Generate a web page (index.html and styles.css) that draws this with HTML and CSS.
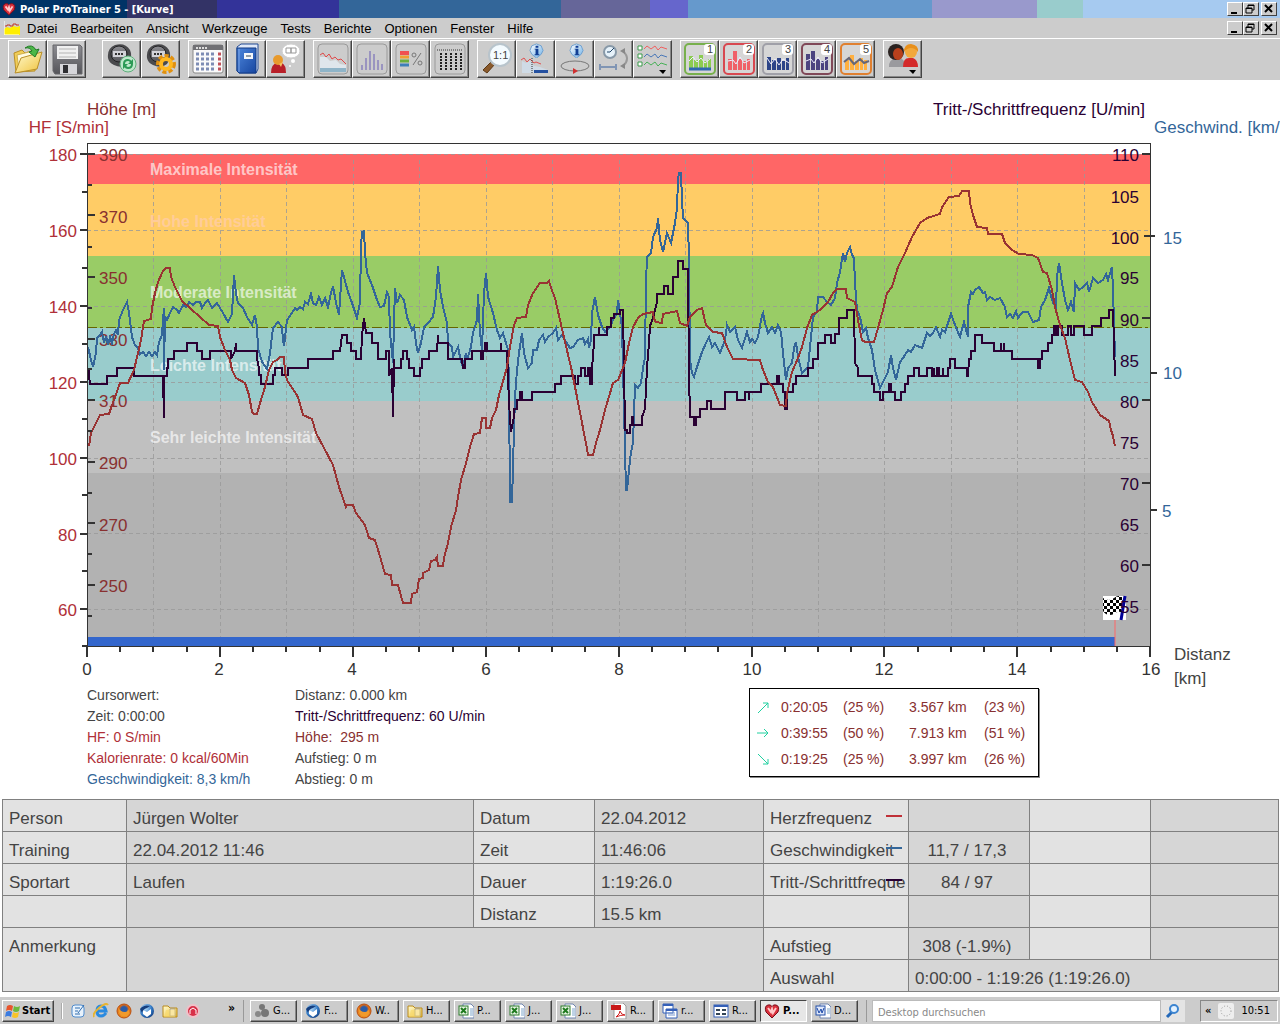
FILE: index.html
```
<!DOCTYPE html>
<html lang="de">
<head>
  <meta charset="UTF-8" />
  <title>Polar ProTrainer 5 - [Kurve]</title>
  <link rel="stylesheet" href="styles.css">
</head>
<body>

  <!-- Shared icon parts -->
  <svg class="defs" aria-hidden="true">
    <defs>
      <linearGradient id="steel" x1="0" y1="0" x2="0" y2="1"><stop offset="0" stop-color="#8d8d92"/><stop offset="1" stop-color="#55555a"/></linearGradient>
      <linearGradient id="folder" x1="0" y1="0" x2="1" y2="1"><stop offset="0" stop-color="#fffbd0"/><stop offset="1" stop-color="#f0c23c"/></linearGradient>
      <linearGradient id="info" x1="0" y1="0" x2="1" y2="1"><stop offset="0" stop-color="#ffffff"/><stop offset="1" stop-color="#6fb0e6"/></linearGradient>
      <linearGradient id="book" x1="0" y1="0" x2="1" y2="1"><stop offset="0" stop-color="#4d86dc"/><stop offset="1" stop-color="#1746a0"/></linearGradient>
      <radialGradient id="ball" cx=".35" cy=".3" r=".8"><stop offset="0" stop-color="#bfe4ff"/><stop offset=".6" stop-color="#3279c4"/><stop offset="1" stop-color="#123a7c"/></radialGradient>
      <radialGradient id="fire" cx=".5" cy=".4" r=".7"><stop offset=".3" stop-color="#2a5ca8"/><stop offset=".5" stop-color="#e06a14"/><stop offset="1" stop-color="#f8b42c"/></radialGradient>
      <pattern id="checks" width="6" height="6" patternUnits="userSpaceOnUse"><path d="M0 0h3v3h-3zM3 3h3v3h-3z" fill="#000"/></pattern>
      <symbol id="i-heart" viewBox="0 0 16 16"><path d="M8 15L2 9Q0 3 4 2 7 1 8 4 9 1 12 2 16 3 14 9z" fill="#d8303c" stroke="#7a0c18"/><path d="M4 5l3 4 1-3 1 4 3-5" fill="none" stroke="#ffc8c8" stroke-width="2"/></symbol>
      <symbol id="i-min" viewBox="0 0 12 10"><path d="M3 8h6v2h-6z"/></symbol>
      <symbol id="i-restore" viewBox="0 0 12 10"><path d="M4 4V1h6v5H8M4 1.500h6M2 4h6v5H2zM2 4.500h6" fill="none" stroke="#000"/></symbol>
      <symbol id="i-close" viewBox="0 0 12 10"><path d="M3 1l7 7M10 1l-7 7" stroke="#000" stroke-width="2"/></symbol>
      <symbol id="i-watch" viewBox="0 0 32 32"><path d="M2 15Q1 5 9 2 19-1 24 7 27 14 22 21 16 26 8 22 3 20 2 15z" fill="#4a4a4d"/><circle cx="13" cy="11" r="8" fill="url(#steel)" stroke="#232325"/><path d="M7 8h13v6H7z" fill="#d2d2d8"/><path d="M9 11h2M12 11h2M15 11h2" stroke="#333" stroke-width="2"/></symbol>
      <symbol id="i-info" viewBox="0 0 16 16"><path d="M8 1l5 2 2 5-2 4-5 4-5-4-2-4 2-5z" fill="url(#info)" stroke="#6d9fd0"/><path d="M7 3h3v2H7zM6 6h4v6h1v1H6v-1h1V7H6z" fill="#123f94"/></symbol>
      <symbol id="i-frame" viewBox="0 0 32 32"><rect x="1" y="1" width="30" height="30" rx="4" fill="none" stroke="#9a9a9a"/></symbol>
      <symbol id="i-sheet" viewBox="0 0 16 16"><path d="M5 1h8l3 3v11H5z" fill="#fff" stroke="#7086b0"/><path d="M12 6h3M12 8h3M12 10h3M12 12h3" stroke="#7fa6cc"/><rect x="1" y="3" width="9" height="9" fill="#e6f4e2" stroke="#2d7a2d"/><path d="M3 5l5 5M8 5l-5 5" stroke="#1e7a1e" stroke-width="2"/></symbol>
      <symbol id="i-folder" viewBox="0 0 16 16"><path d="M1 3h5l2 2h7v9H1z" fill="url(#folder)" stroke="#b98a1c"/><path d="M8 6h5v7H8z" fill="#fff" stroke="#999"/><path d="M4 7l10-1-1 8H2z" fill="#f6d766" opacity=".6"/></symbol>
      <symbol id="i-fox" viewBox="0 0 16 16"><circle cx="8" cy="8" r="7" fill="url(#fire)" stroke="#b84c10"/><path d="M2 4Q4 9 9 9q3 0 3-3 3 4-1 7-5 2-8-3z" fill="#f09a2c"/></symbol>
      <symbol id="i-bird" viewBox="0 0 16 16"><circle cx="8" cy="8" r="7" fill="url(#ball)"/><path d="M4 7l4 2 4-3v5l-4 3-4-3z" fill="#fff"/><path d="M1 6Q5 1 11 3l-3 2Q4 6 3 10z" fill="#153f80"/></symbol>
    </defs>
  </svg>

  <header class="titlebar">
    <svg class="app-icon"><use href="#i-heart"/></svg>
    <h1>Polar ProTrainer 5 - [Kurve]</h1>
    <div class="win-buttons">
      <button aria-label="Minimieren"><svg><use href="#i-min"/></svg></button>
      <button aria-label="Wiederherstellen"><svg><use href="#i-restore"/></svg></button>
      <button class="close" aria-label="Schließen"><svg><use href="#i-close"/></svg></button>
    </div>
  </header>

  <nav class="menubar">
    <svg class="doc-icon" viewBox="0 0 16 14"><path d="M0 14V8l3-2 3 1 3-2 4 1 3-1v9z" fill="#ffee00"/><path d="M1 5h2v-1h3v1h3V3h3v1h3" fill="none" stroke="#c0392b"/><path d="M0 0v14h15" fill="none" stroke="#fff"/></svg>
    <button>Datei</button>
    <button>Bearbeiten</button>
    <button>Ansicht</button>
    <button>Werkzeuge</button>
    <button>Tests</button>
    <button>Berichte</button>
    <button>Optionen</button>
    <button>Fenster</button>
    <button>Hilfe</button>
    <div class="win-buttons">
      <button aria-label="Fenster minimieren"><svg><use href="#i-min"/></svg></button>
      <button aria-label="Fenster wiederherstellen"><svg><use href="#i-restore"/></svg></button>
      <button class="close" aria-label="Fenster schließen"><svg><use href="#i-close"/></svg></button>
    </div>
  </nav>

  <div class="toolbar">
    <div class="tools wide">
      <button aria-label="Öffnen"><svg viewBox="0 0 32 32"><path d="M2 10l8-3 3 3 9-3 2 4-1 17-19 1z" fill="#f1cd56" stroke="#b98f28"/><path d="M5 12l16-4 1 16-15 3z" fill="#fffbe0" stroke="#d0b050"/><path d="M3 30l6-15 21-6-5 17z" fill="url(#folder)" stroke="#b98f28"/><path d="M13 5Q20 0 24 7l3-1-4 8-6-5 3-1Q18 4 13 5z" fill="#4cb848" stroke="#1f7a24"/></svg></button>
      <button aria-label="Speichern"><svg viewBox="0 0 32 32"><path d="M2 2h27l2 2v27H4l-2-3z" fill="url(#steel)" stroke="#66666a"/><path d="M6 3h21v13H6z" fill="#f0f0f0"/><path d="M8 6h17M8 10h17M8 14h17" stroke="#b4b4b4"/><path d="M9 21h17v10H9z" fill="#d6d6da"/><path d="M12 22h5v8h-5z" fill="#2e2e32"/></svg></button>
    </div>
    <div class="tools">
      <button aria-label="Daten übertragen"><svg viewBox="0 0 32 32"><use href="#i-watch" width="32" height="32"/><circle cx="22" cy="21" r="8" fill="#bfe8cc" stroke="#5fae7c"/><path d="M18 21q0-4 4-4 2 0 3 2M26 21q0 4-4 4-2 0-3-2" fill="none" stroke="#2c9a56" stroke-width="2"/><path d="M27 16v5h-5zM17 26v-5h5z" fill="#2c9a56"/></svg></button>
      <button aria-label="Gerät einstellen"><svg viewBox="0 0 32 32"><use href="#i-watch" width="32" height="32"/><circle cx="21" cy="21" r="8" fill="none" stroke="#e09010" stroke-width="4" stroke-dasharray="4 2"/><circle cx="21" cy="21" r="5" fill="none" stroke="#ffb820" stroke-width="4"/></svg></button>
    </div>
    <div class="tools">
      <button aria-label="Kalender"><svg viewBox="0 0 32 32"><rect x="1" y="2" width="30" height="28" rx="2" fill="#fafafa" stroke="#888"/><path d="M1 2h30v5H1z" fill="#707074"/><path d="M4 5h12" stroke="#ddd" stroke-width="2" stroke-dasharray="2 1"/><path d="M4 11h20M4 16h20M4 21h20M4 26h20" stroke="#7d8cb4" stroke-width="3" stroke-dasharray="3 2"/><path d="M26 11h3M26 16h3M26 21h3M26 26h3" stroke="#c05058" stroke-width="3"/></svg></button>
      <button aria-label="Tagebuch"><svg viewBox="0 0 32 32"><path d="M6 4l4-3h17v25l-2 4H8l-2-2z" fill="#dfe8f8" stroke="#224a94"/><path d="M6 5h19v25H8l-2-2z" fill="url(#book)" stroke="#123a84"/><path d="M8 6v23" stroke="#7ea6e6"/><path d="M13 10h9v6h-9z" fill="#f4f6fa"/><path d="M15 13h5" stroke="#345"/></svg></button>
      <button aria-label="Person"><svg viewBox="0 0 32 32"><path d="M1 30q0-9 6-10h5q4 2 4 10z" fill="#b81f28"/><circle cx="8" cy="17" r="5" fill="#e89a2c"/><path d="M9 21l2 3 2-5z" fill="#f4c060"/><ellipse cx="21" cy="8" rx="9" ry="7" fill="#fff" stroke="#d0d0d0"/><path d="M16 5h5v5h-5zM21 5h5v5h-5z" fill="none" stroke="#999"/><circle cx="23" cy="18" r="2" fill="#fff"/><circle cx="20" cy="23" r="1" fill="#fff"/></svg></button>
    </div>
    <div class="tools">
      <button aria-label="Kurve"><svg viewBox="0 0 32 32"><use href="#i-frame" width="32" height="32"/><path d="M3 14l6 0 4 4 6-1 4 4 6 1v7H3z" fill="#dfe6ec"/><path d="M3 25h26v4H3z" fill="#8fb4c8"/><path d="M3 12l3-2 3 4 3-3 3 5 3-2 3 3 3-1 5 5" fill="none" stroke="#e04848"/></svg></button>
      <button aria-label="Verteilung"><svg viewBox="0 0 32 32"><use href="#i-frame" width="32" height="32"/><path d="M6 27v-5M10 27V15M14 27V8M18 27V11M22 27V17M26 27v-6" stroke="#9a94c0" stroke-width="2"/></svg></button>
      <button aria-label="Zonen"><svg viewBox="0 0 32 32"><use href="#i-frame" width="32" height="32"/><path d="M5 10h9" stroke="#f05050" stroke-width="4"/><path d="M5 14h9" stroke="#f0a030" stroke-width="3"/><path d="M5 18h9" stroke="#6cae3c" stroke-width="3"/><path d="M5 22h9" stroke="#3f7fb8" stroke-width="3"/><path d="M26 10l-8 12" stroke="#777"/><circle cx="19" cy="12" r="2" fill="none" stroke="#777"/><circle cx="25" cy="20" r="2" fill="none" stroke="#777"/></svg></button>
      <button aria-label="Tabelle"><svg viewBox="0 0 32 32"><use href="#i-frame" width="32" height="32"/><path d="M3 7h26" stroke="#333" stroke-dasharray="1 1"/><path d="M7 10v17M12 10v17M17 10v17M22 10v17M27 10v17" stroke="#222" stroke-width="2" stroke-dasharray="2 1"/></svg></button>
    </div>
    <div class="tools">
      <button aria-label="Zoom 1:1"><svg viewBox="0 0 32 32"><path d="M2 27l9-9 3 3-8 9z" fill="#8a5a2c" stroke="#5c3814"/><circle cx="19" cy="12" r="11" fill="#f4fbff" stroke="#b8c4cc" stroke-width="2"/><text x="12" y="16" class="t-icon">1:1</text></svg></button>
      <button aria-label="Kurveninfo"><svg viewBox="0 0 32 32"><use href="#i-info" x="9" y="0" width="15" height="15"/><path d="M2 18l4 2 4-2 4 5 6 1 8 3v3H2z" fill="#cfdbe6"/><path d="M14 27h14v3H14z" fill="#2450a0"/><path d="M1 17l3-2 3 4 3-3 4 4 2-1 5 2" fill="none" stroke="#e05050"/><path d="M12 15v15" stroke="#333" stroke-dasharray="1 1"/></svg></button>
      <button aria-label="Rundeninfo"><svg viewBox="0 0 32 32"><use href="#i-info" x="10" y="0" width="15" height="15"/><ellipse cx="16" cy="23" rx="14" ry="5" fill="none" stroke="#777"/><path d="M14 25l5 3-5 3z" fill="#d03030"/></svg></button>
      <button aria-label="Zeit oder Distanz"><svg viewBox="0 0 32 32"><circle cx="12" cy="9" r="6" fill="#e6f2fa" stroke="#8899a8" stroke-width="2"/><path d="M12 9l4-4M12 9h-3" stroke="#246"/><path d="M2 24h16M2 21v6M18 21v6" stroke="#8095b4" stroke-width="2"/><path d="M25 8q8 8 0 15" fill="none" stroke="#999" stroke-width="2"/><path d="M22 8l5-3v6zM22 23l5-3v6z" fill="#888"/></svg></button>
      <button aria-label="Kurvenauswahl"><svg viewBox="0 0 32 32"><path d="M1 3h4v4H1zM1 11h4v4H1zM1 19h4v4H1z" fill="#fff" stroke="#3a9a4a"/><path d="M7 6l3-3 4 3 4-3 3 4 3-3 6 2" fill="none" stroke="#f06060"/><path d="M7 14l3-3 4 3 4-3 3 4 3-3 6 2" fill="none" stroke="#4a78b8"/><path d="M7 22l3-3 4 3 4-3 3 4 3-3 6 2" fill="none" stroke="#48b058"/><path d="M22 27h7l-3 4z"/></svg></button>
    </div>
    <div class="tools presets">
      <button class="p1" aria-label="Ansicht 1"><svg viewBox="0 0 32 32"><rect x="1" y="1" width="30" height="30" rx="4" class="edge"/><path d="M5 27V13h4v14M10 27V17h4v10M15 27V12h4v15M20 27V18h3v9M24 27V16h3v11" class="bars"/><path d="M5 18l4-4 4 5 4-4 4 5 5-4" class="wave"/><path d="M5 26h22" stroke="#2f68b0" stroke-width="3"/><rect x="20" y="1" width="11" height="11" rx="3" fill="#fff"/><text x="23" y="10" class="t-icon">1</text></svg></button>
      <button class="p2" aria-label="Ansicht 2"><svg viewBox="0 0 32 32"><rect x="1" y="1" width="30" height="30" rx="4" class="edge"/><path d="M5 27V16h4v11M10 27V8h4v19M15 27V16h4v11M20 27V18h3v9M24 27V16h3v11" class="bars"/><path d="M5 18l5-1 3 4 4-7 4 6 6-3" class="wave"/><rect x="20" y="1" width="11" height="11" rx="3" fill="#fff"/><text x="23" y="10" class="t-icon">2</text></svg></button>
      <button class="p3" aria-label="Ansicht 3"><svg viewBox="0 0 32 32"><rect x="1" y="1" width="30" height="30" rx="4" class="edge"/><path d="M5 27V14h4v13M10 27V17h4v10M15 27V15h4v12M20 27V18h3v9M24 27V15h3v12" class="bars"/><path d="M5 15l4 6 4-5 4 6 4-6 6 4" class="wave"/><rect x="20" y="1" width="11" height="11" rx="3" fill="#fff"/><text x="23" y="10" class="t-icon">3</text></svg></button>
      <button class="p4" aria-label="Ansicht 4"><svg viewBox="0 0 32 32"><rect x="1" y="1" width="30" height="30" rx="4" class="edge"/><path d="M5 27V11h4v16M10 27V8h4v19M15 27V16h4v11M20 27V18h3v9M24 27V14h3v13" class="bars"/><path d="M5 18l5-2 3 4 4-6 4 6 6-4" class="wave"/><rect x="20" y="1" width="11" height="11" rx="3" fill="#fff"/><text x="23" y="10" class="t-icon">4</text></svg></button>
      <button class="p5" aria-label="Ansicht 5"><svg viewBox="0 0 32 32"><rect x="1" y="1" width="30" height="30" rx="4" class="edge"/><path d="M5 27V17h4v10M10 27V12h4v15M15 27V18h4v9M20 27V15h3v12M24 27V17h3v10" class="bars"/><path d="M4 19l5-4 5 6 6-5 4 4 5-2" class="wave"/><rect x="20" y="1" width="11" height="11" rx="3" fill="#fff"/><text x="23" y="10" class="t-icon">5</text></svg></button>
    </div>
    <div class="tools">
      <button aria-label="Person wählen"><svg viewBox="0 0 32 32"><path d="M2 24q0-8 6-8h7q4 3 4 8z" fill="#9a9a9e"/><path d="M16 24q0-9 6-9h4q5 2 5 9z" fill="#d42a2a"/><circle cx="24" cy="9" r="6" fill="#f2a83c"/><path d="M17 9q0-8 7-8 8 1 7 8-3-4-7-4t-7 4z" fill="#e8901c"/><circle cx="9" cy="9" r="8" fill="#2a2220"/><ellipse cx="11" cy="11" rx="5" ry="6" fill="#b8401c"/><path d="M22 27h7l-3 4z"/></svg></button>
    </div>
  </div>

  <main>
    <svg class="chart" viewBox="0 80 1280 605" role="img" aria-label="Trainingskurve">
      <!-- intensity zones -->
      <g shape-rendering="crispEdges">
        <rect x="87" y="154" width="1063" height="30" fill="#ff6666"/>
        <rect x="87" y="184" width="1063" height="72" fill="#ffcc66"/>
        <rect x="87" y="256" width="1063" height="72" fill="#99cc66"/>
        <rect x="87" y="328" width="1063" height="73" fill="#99cccc"/>
        <rect x="87" y="401" width="1063" height="72" fill="#c0c0c0"/>
        <rect x="87" y="473" width="1063" height="173" fill="#b2b2b2"/>
      </g>
      <path class="grid" d="M87 154H1150M87 230H1150M87 306H1150M87 382H1150M87 458H1150M87 533H1150M87 609H1150M153 160V637M220 160V637M286 160V637M353 160V637M419 160V637M486 160V637M552 160V637M619 160V637M685 160V637M752 160V637M818 160V637M884 160V637M951 160V637M1017 160V637M1084 160V637"/>
      <g class="zones">
        <text x="150" y="175">Maximale Intensität</text>
        <text x="150" y="227" class="faint">Hohe Intensität</text>
        <text x="150" y="298">Moderate Intensität</text>
        <text x="150" y="371">Leichte Intensität</text>
        <text x="150" y="443">Sehr leichte Intensität</text>
      </g>
      <g class="altitude-labels">
        <text x="99" y="161">390</text><text x="99" y="223">370</text><text x="99" y="284">350</text><text x="99" y="346">330</text>
        <text x="99" y="407">310</text><text x="99" y="469">290</text><text x="99" y="531">270</text><text x="99" y="592">250</text>
        <text x="87" y="115">Höhe [m]</text>
      </g>
      <rect x="87" y="637" width="1028" height="9" fill="#3366cc"/>
      <path class="limit" d="M87 327H1150"/>

      <!-- speed -->
      <polyline class="line speed" points="88,347 91,360 93,367 96,353 97,338 100,335 102,332 104,343 106,336 108,345 110,337 112,343 114,334 116,330 118,335 119,320 123,310 127,302 129,313 132,337 135,345 138,348 140,354 143,352 146,356 149,352 152,356 155,352 157,355 159,342 162,335 163,320 164,308 164,370 165,317 167,320 170,313 173,307 177,310 179,313 183,305 186,307 189,302 193,305 196,302 200,302 202,308 205,303 208,300 212,308 217,303 220,308 223,313 228,322 232,314 234,275 236,293 238,303 243,308 247,317 252,325 255,315 257,327 258,348 262,362 267,369 270,353 273,328 278,322 282,327 283,340 284,346 287,320 292,313 295,308 297,310 300,307 303,309 305,302 308,304 311,294 313,303 316,305 319,297 322,305 325,298 328,307 331,293 333,286 336,303 339,315 342,270 344,277 348,292 352,303 357,318 360,303 361,247 362,232 364,231 365,253 367,273 372,285 377,300 380,307 384,306 387,292 389,297 390,333 393,363 394,323 395,288 397,303 400,295 404,300 407,317 412,330 414,327 416,343 418,353 421,343 424,327 428,323 433,317 436,297 438,266 440,290 443,307 447,323 448,343 452,347 453,357 458,347 460,357 463,368 466,353 467,360 471,347 473,333 477,320 478,294 480,333 482,350 484,293 486,273 488,297 493,313 497,330 500,338 503,333 506,343 508,350 509,383 510,502 512,502 514,430 515,397 517,370 519,353 522,333 524,353 528,368 532,363 533,350 537,350 539,340 543,335 545,342 548,337 553,333 556,328 558,340 562,335 565,340 570,348 573,347 578,340 583,338 585,344 588,339 589,348 591,340 592,313 595,297 598,315 602,327 605,332 610,327 613,320 617,313 618,300 620,313 622,327 623,367 626,490 627,490 629,470 631,452 633,443 635,385 638,388 641,383 643,368 645,357 646,283 647,257 651,253 653,237 657,228 658,218 660,240 663,252 667,233 671,243 675,223 677,208 678,180 679,173 681,173 682,200 683,218 688,223 689,260 690,360 692,373 694,377 697,367 702,352 706,343 709,337 712,347 715,343 720,353 725,340 727,325 730,332 735,327 738,340 742,348 747,332 750,342 752,339 755,343 758,337 762,315 763,313 765,323 768,333 772,327 775,333 778,325 781,332 783,353 786,380 788,368 792,363 794,348 796,342 798,357 802,373 805,370 808,367 811,337 813,317 817,312 818,297 823,297 827,302 831,305 835,298 837,283 840,272 843,253 845,262 847,253 850,247 852,255 854,258 855,283 857,310 860,317 863,332 866,328 868,338 872,350 875,370 880,388 883,382 888,372 891,355 893,368 896,380 900,362 903,358 905,355 908,350 911,352 915,345 922,348 927,333 930,336 933,333 936,327 940,337 942,330 945,332 951,314 955,325 960,337 964,322 968,337 968,307 971,292 973,294 975,290 979,287 983,293 985,292 987,300 990,297 995,300 1000,298 1005,307 1007,317 1010,314 1013,318 1016,311 1018,318 1020,315 1023,312 1028,312 1033,322 1039,320 1041,307 1045,300 1049,288 1053,303 1056,307 1057,277 1059,263 1062,283 1065,300 1068,310 1071,302 1074,312 1075,283 1079,290 1083,287 1087,283 1089,292 1093,278 1098,283 1103,280 1106,274 1108,280 1112,267 1113,290 1114,323 1115,357"/>

      <!-- cadence -->
      <path class="line cadence" d="M89 368V375L90 384H107V376H117V368H134V376H163L164 418V376H167V368H168V359H174V351H187V343H197V351H202V359H210V351H231V359L235 351 236 343V351H257V359L259 368V375H261V384H273V375H275V368H282V375H288V368H308V359H333V351H340L342 335H347V343H351V351H356V359H361L362 335 364 318 366 333H372V343H378V359H386V351H389V376L392 368 393 417 394 359V368H401V359H403V351H407V359H409V368H414V376H420V368H422V359H429V351H437L438 335V343H448V359H462L463 368H465V359H472V351H481V359H483V351H485V343H487V351H501V343V351H507L509 403 511 432 514 416V409H517V400H520V392H522V400H532V392H555V384H561V376H575V384H578V376H581V368H585V376H588V368H590V384H592V368L594 343V335H599V327V335H607V327H611V318H614V314H620V310H623L624 367 625 430H627V433H630V425H632V417H633V425H642V417L645 409 647 368 649 343 650 326 653 318 655 310 657 302V294H664V286H668V294H673V277H678V261H683V269H688L689 384 690 408V417H694V425H696V417H700V409H707V401H711V409H725V392H737V400H745V392H749V400V392H761V384H777V376H779V384H783V392H785V409H787V392H793V384H796V376H808V368H813V359H818V343H825V335H831V343H835V334H839V318H847V310H854L855 363 858 368V376H872V384H874V392H880V400H883V392H889V384H891V392H895V400H901V392H905V384H908V376H914V368H919V376H927V368H932V376H934V368V376H937V368H939V376H943V368V376H948V368H950V359H955V368H967V376H968L969 359H971V351H975V335H982V343H994V351H1001V343V351H1004V343V351H1012V359H1038V368H1040V359H1042V351H1048V343H1052V335H1054V326H1056V335H1058V326H1062V335H1068V326H1071V335H1074V326H1084V335H1092V326H1101V318H1109V310H1113L1115 376"/>

      <!-- altitude -->
      <polyline class="line altitude" points="89,446 91,433 96,423 100,415 109,414 111,408 115,397 120,383 128,383 134,370 138,353 141,340 144,321 151,319 152,308 155,293 158,282 163,271 166,268 170,268 171,277 175,287 182,301 190,308 200,317 209,325 218,326 220,337 225,350 230,360 232,370 236,378 245,383 249,395 252,412 254,414 257,414 260,403 265,387 269,370 273,362 277,360 280,357 284,357 285,372 287,380 298,397 303,415 312,419 316,433 324,448 333,465 339,487 346,507 347,505 353,505 356,513 365,525 369,538 375,540 379,553 385,574 391,575 392,585 398,585 403,603 411,603 412,594 417,592 419,579 423,578 423,573 429,570 431,561 435,560 437,557 438,566 443,566 444,558 448,543 451,527 456,510 458,497 461,480 466,463 470,447 474,434 480,433 482,418 486,418 486,428 490,428 492,418 496,410 499,395 504,378 507,367 510,347 514,325 517,318 526,317 528,305 533,293 540,283 547,283 549,281 551,288 555,298 560,320 565,342 571,367 577,397 583,428 586,443 588,455 593,455 596,443 600,430 605,410 613,383 618,380 625,363 629,343 633,327 638,318 643,314 653,312 654,319 656,322 662,323 663,314 677,311 680,323 687,326 690,317 697,310 702,308 706,325 713,332 722,333 727,347 733,359 760,360 763,370 768,382 773,387 780,405 786,406 787,393 792,372 798,358 802,347 807,328 812,315 820,310 828,302 833,293 837,289 846,289 847,298 855,302 858,320 862,340 865,342 874,342 878,328 883,310 887,293 892,287 898,267 905,253 912,237 920,223 927,218 940,214 942,207 949,197 959,196 962,191 969,191 970,203 973,215 977,227 987,228 988,234 1002,234 1005,243 1012,250 1019,254 1032,255 1038,258 1043,272 1047,273 1052,290 1055,307 1060,325 1065,338 1070,360 1075,380 1082,382 1088,392 1092,402 1100,415 1109,421 1111,430 1113,436 1115,446"/>

      <!-- frame and ticks -->
      <path class="frame" d="M87 646V143H1150V646z"/>
      <path class="axis" d="M80 154H95M80 230H87M80 306H87M80 382H87M80 458H87M80 534H87M80 609H87M82 192H87M82 268H87M82 344H87M82 419H87M82 495H87M82 571H87M82 646H87M87 215H95M87 277H95M87 339H95M87 400H95M87 462H95M87 523H95M87 585H95M87 185H92M87 247H92M87 308H92M87 369H92M87 431H92M87 493H92M87 554H92M87 616H92M1142 154H1150M1144 236H1155M1142 318H1150M1150 373H1157M1142 400H1150M1142 483H1150M1150 510H1157M1142 565H1150"/>
      <path class="axis" d="M87 646V657M220 646V657M353 646V657M486 646V657M619 646V657M752 646V657M884 646V657M1017 646V657M1150 646V657M120 646V652M153 646V652M187 646V652M253 646V652M286 646V652M320 646V652M386 646V652M419 646V652M453 646V652M519 646V652M552 646V652M585 646V652M652 646V652M685 646V652M718 646V652M785 646V652M818 646V652M851 646V652M918 646V652M951 646V652M984 646V652M1051 646V652M1084 646V652M1117 646V652"/>

      <!-- finish flag -->
      <path d="M1115 619V646" stroke="#ff6666"/>
      <rect x="1103" y="596" width="23" height="24" fill="#fff"/>
      <path d="M1103 598q6 4 11 0t9 0l-2 14q-4-1-7 2-7 3-11-3z" fill="url(#checks)"/>
      <path d="M1125 596l-4 24" stroke="#000099" stroke-width="3"/>

      <g class="hr-labels">
        <text x="77" y="161">180</text><text x="77" y="237">160</text><text x="77" y="313">140</text><text x="77" y="389">120</text>
        <text x="77" y="465">100</text><text x="77" y="541">80</text><text x="77" y="616">60</text>
        <text x="109" y="133">HF [S/min]</text>
      </g>
      <g class="cadence-labels">
        <text x="1139" y="161">110</text><text x="1139" y="203">105</text><text x="1139" y="244">100</text><text x="1139" y="284">95</text>
        <text x="1139" y="326">90</text><text x="1139" y="367">85</text><text x="1139" y="408">80</text><text x="1139" y="449">75</text>
        <text x="1139" y="490">70</text><text x="1139" y="531">65</text><text x="1139" y="572">60</text><text x="1139" y="613">55</text>
        <text x="1145" y="115">Tritt-/Schrittfrequenz [U/min]</text>
      </g>
      <g class="speed-labels">
        <text x="1163" y="244">15</text><text x="1163" y="379">10</text><text x="1162" y="517">5</text>
        <text x="1154" y="133">Geschwind. [km/</text>
      </g>
      <g class="distance-labels">
        <text x="87" y="675">0</text><text x="219" y="675">2</text><text x="352" y="675">4</text><text x="486" y="675">6</text><text x="619" y="675">8</text>
        <text x="752" y="675">10</text><text x="884" y="675">12</text><text x="1017" y="675">14</text><text x="1151" y="675">16</text>
      </g>
      <g class="distance-title">
        <text x="1174" y="660">Distanz</text><text x="1174" y="684">[km]</text>
      </g>
    </svg>

    <section class="readout">
      <ul>
        <li>Cursorwert:</li>
        <li>Zeit: 0:00:00</li>
        <li class="c-hr">HF: 0 S/min</li>
        <li class="c-hr">Kalorienrate: 0 kcal/60Min</li>
        <li class="c-speed">Geschwindigkeit: 8,3 km/h</li>
      </ul>
      <ul>
        <li>Distanz: 0.000 km</li>
        <li class="c-cadence">Tritt-/Schrittfrequenz: 60 U/min</li>
        <li class="c-alt">Höhe:&nbsp; 295 m</li>
        <li>Aufstieg: 0 m</li>
        <li>Abstieg: 0 m</li>
      </ul>
      <table class="climb">
        <tr><td><svg viewBox="0 0 12 12"><path d="M1 11L11 1M6 1h5v5"/></svg></td><td>0:20:05</td><td>(25 %)</td><td>3.567 km</td><td>(23 %)</td></tr>
        <tr><td><svg viewBox="0 0 12 12"><path d="M0 6h11M7 2l4 4-4 4"/></svg></td><td>0:39:55</td><td>(50 %)</td><td>7.913 km</td><td>(51 %)</td></tr>
        <tr><td><svg viewBox="0 0 12 12"><path d="M1 1l10 10M6 11h5V6"/></svg></td><td>0:19:25</td><td>(25 %)</td><td>3.997 km</td><td>(26 %)</td></tr>
      </table>
    </section>

    <table class="summary">
      <colgroup><col class="w1"><col class="w2"><col class="w3"><col class="w4"><col class="w5"><col class="w3"><col class="w3"><col class="w6"></colgroup>
      <tr><th>Person</th><td>Jürgen Wolter</td><th>Datum</th><td>22.04.2012</td><th class="key k-hr">Herzfrequenz</th><td></td><td class="light"></td><td></td></tr>
      <tr><th>Training</th><td>22.04.2012 11:46</td><th>Zeit</th><td>11:46:06</td><th class="key k-speed">Geschwindigkeit</th><td class="mid">11,7 / 17,3</td><td class="light"></td><td></td></tr>
      <tr><th>Sportart</th><td>Laufen</td><th>Dauer</th><td>1:19:26.0</td><th class="key k-cadence">Tritt-/Schrittfreque</th><td class="mid">84 / 97</td><td class="light"></td><td></td></tr>
      <tr><th></th><td></td><th>Distanz</th><td>15.5 km</td><th></th><td></td><td class="light"></td><td></td></tr>
      <tr><th rowspan="2" class="note">Anmerkung</th><td rowspan="2" colspan="3"></td><th>Aufstieg</th><td class="mid">308 (-1.9%)</td><td class="light"></td><td></td></tr>
      <tr><th>Auswahl</th><td colspan="3">0:00:00 - 1:19:26 (1:19:26.0)</td></tr>
    </table>
  </main>

  <footer class="taskbar">
    <button class="start"><svg viewBox="0 0 16 16"><path d="M2 3q3-2 6 0L7 8Q4 6 1 8z" fill="#e8542c"/><path d="M9 3q3 2 6 0l-1 5q-3 2-6 0z" fill="#6cb83c"/><path d="M1 9q3-2 6 0l-1 5Q3 12 0 14z" fill="#3c7ce0"/><path d="M8 9q3 2 6 0l-1 5q-3 2-6 0z" fill="#f8c428"/></svg>Start</button>
    <div class="quick">
      <button aria-label="Desktop anzeigen"><svg viewBox="0 0 16 16"><rect x="2" y="2" width="12" height="12" rx="3" fill="#e8f2fc" stroke="#4f8cce"/><path d="M5 5h5M5 8h3M5 11h5M8 10l6-8" fill="none" stroke="#2f6cae"/></svg></button>
      <button aria-label="Internet Explorer"><svg viewBox="0 0 16 16"><path d="M13 10q-2 3-5 3-4 0-4-5t4-5q4 0 5 5H5" fill="none" stroke="#2a8ae0" stroke-width="3"/><path d="M1 14Q-1 11 6 5t9-3" fill="none" stroke="#e8b430" stroke-width="2"/></svg></button>
      <button aria-label="Firefox"><svg><use href="#i-fox"/></svg></button>
      <button aria-label="Thunderbird"><svg><use href="#i-bird"/></svg></button>
      <button aria-label="Explorer"><svg><use href="#i-folder"/></svg></button>
      <button aria-label="Antivirus"><svg viewBox="0 0 16 16"><circle cx="8" cy="8" r="6" fill="#d83048" stroke="#f0c0c8" stroke-width="2"/><path d="M5 11V7l3-2 3 2v4" fill="none" stroke="#fff"/></svg></button>
    </div>
    <button class="more">»</button>
    <div class="tasks">
      <button><svg viewBox="0 0 16 16"><circle cx="8" cy="4" r="3" fill="#777"/><circle cx="4" cy="11" r="3" fill="#888"/><circle cx="11" cy="10" r="4" fill="#777"/></svg>G...</button>
      <button><svg><use href="#i-bird"/></svg>F...</button>
      <button><svg><use href="#i-fox"/></svg>W..</button>
      <button><svg><use href="#i-folder"/></svg>H...</button>
      <button><svg><use href="#i-sheet"/></svg>P...</button>
      <button><svg><use href="#i-sheet"/></svg>J...</button>
      <button><svg><use href="#i-sheet"/></svg>J...</button>
      <button><svg viewBox="0 0 16 16"><path d="M3 0h9l3 3v13H3z" fill="#fff" stroke="#999"/><path d="M0 2h10v5H0z" fill="#c81818"/><path d="M5 14q4-3 4-6 1 4 5 4-5 0-9 2z" fill="none" stroke="#d02020"/></svg>R...</button>
      <button><svg viewBox="0 0 16 16"><path d="M1 1h10v9H1zM4 6h11v9H4z" fill="#fff" stroke="#3560b8"/><path d="M1 2h10M4 7h11" stroke="#3560b8" stroke-width="2"/><path d="M6 10h7M6 12h7" stroke="#7898d0"/></svg>r...</button>
      <button><svg viewBox="0 0 16 16"><rect x="1" y="2" width="14" height="12" fill="#fff" stroke="#3560b8"/><path d="M1 3h14" stroke="#3560b8" stroke-width="2"/><path d="M3 7h4M3 11h4M9 7h4M9 11h4" stroke="#345" stroke-width="2"/></svg>R...</button>
      <button class="active"><svg><use href="#i-heart"/></svg>P...</button>
      <button><svg viewBox="0 0 16 16"><path d="M5 1h8l3 3v11H5z" fill="#fff" stroke="#7086b0"/><path d="M12 6h3M12 8h3M12 10h3" stroke="#7fa6cc"/><rect x="1" y="3" width="9" height="9" fill="#dfe8fa" stroke="#2450a8"/><path d="M2 5l2 5 2-4 1 4 2-5" fill="none" stroke="#1c48a8"/></svg>D...</button>
    </div>
    <form class="search">
      <input type="text" aria-label="Desktop durchsuchen" placeholder="Desktop durchsuchen">
      <button type="button" aria-label="Suchen"><svg viewBox="0 0 16 16"><path d="M2 14l5-5" stroke="#2468b8" stroke-width="3"/><circle cx="9" cy="6" r="4" fill="#e4f2ff" stroke="#3c84d0" stroke-width="2"/></svg></button>
    </form>
    <div class="tray">
      <button aria-label="Ausgeblendete Symbole">«</button>
      <svg viewBox="0 0 16 16"><rect width="16" height="16" rx="2" fill="#eee"/><circle cx="8" cy="8" r="5" fill="none" stroke="#999" stroke-dasharray="1 2"/></svg>
      <time>10:51</time>
    </div>
  </footer>

</body>
</html>
```
FILE: styles.css
```
* {
  box-sizing: border-box;
}

body {
  margin: 0;
  min-height: 100vh;
  display: flex;
  flex-direction: column;
  background: #ccc;
  font-family: "Liberation Sans", Arial, sans-serif;
  color: #444;
}

button {
  font: inherit;
  color: #000;
  padding: 0;
  border: none;
  background: none;
}

svg {
  display: block;
}

.defs {
  position: absolute;
  width: 0;
  height: 0;
}

/* Title bar and menu */
.titlebar {
  display: flex;
  align-items: center;
  height: 18px;
  padding: 0 3px 0 2px;
  background: linear-gradient(to right, #003366 127px, #333366 127px 217px, #333399 217px 339px, #336699 339px 561px, #666699 561px 650px, #6666cc 650px 688px, #6699cc 688px 932px, #9999cc 932px 1037px, #99cccc 1037px 1083px, #a6caf0 1083px);
}

.titlebar h1 {
  margin: 0 0 0 4px;
  font: bold 11px "DejaVu Sans Condensed", Tahoma, sans-serif;
  color: #fff;
}

.app-icon {
  width: 14px;
  height: 14px;
}

.win-buttons {
  display: flex;
  margin-left: auto;
}

.win-buttons button {
  width: 16px;
  height: 14px;
  background: #ccc;
  border: 1px solid;
  border-color: #fff #404040 #404040 #fff;
}

.win-buttons svg {
  width: 12px;
  height: 10px;
}

.win-buttons .close {
  margin-left: 2px;
}

.menubar {
  display: flex;
  align-items: center;
  gap: 13px;
  height: 20px;
  padding: 0 3px 0 4px;
  font-size: 13px;
}

.menubar .doc-icon {
  width: 16px;
  height: 14px;
  margin-right: -6px;
}

/* Toolbar */
.toolbar {
  display: flex;
  gap: 8px;
  height: 42px;
  padding: 1px 8px;
  border-top: 1px solid #fff;
}

.tools {
  display: flex;
}

.tools.wide {
  margin-right: 8px;
}

.tools button {
  display: flex;
  align-items: center;
  justify-content: center;
  width: 39px;
  height: 38px;
  border: 1px solid;
  border-color: #fff #444 #444 #fff;
  box-shadow: inset -1px -1px #888;
}

.tools svg {
  width: 32px;
  height: 32px;
}

.t-icon {
  font-size: 11px;
  fill: #444;
}

.presets .edge {
  fill: rgba(255, 255, 255, 0.2);
  stroke-width: 2;
}

.presets .wave {
  fill: none;
  stroke: #eef;
}

.p1 .edge { stroke: #78b04c; }
.p1 .bars { fill: #8ccc50; }
.p2 .edge { stroke: #d84850; }
.p2 .bars { fill: #f06068; }
.p3 .edge { stroke: #a0a0a8; }
.p3 .bars { fill: #2c4488; }
.p4 .edge { stroke: #804858; }
.p4 .bars { fill: #4c4480; }
.p5 .edge { stroke: #e08030; }
.p5 .bars { fill: #ffb040; }

.presets .p5 .wave {
  stroke: #667;
  stroke-width: 2;
}

/* Chart */
main {
  flex: 1;
  overflow: hidden;
  background: #fff;
}

.chart {
  width: 100%;
  height: auto;
  overflow: visible;
  font-size: 17px;
}

.grid {
  fill: none;
  stroke: #999;
  stroke-dasharray: 4 3;
  opacity: 0.8;
  shape-rendering: crispEdges;
}

.zones text {
  font-weight: bold;
  font-size: 16px;
  fill: rgba(255, 255, 255, 0.65);
}

.zones .faint {
  fill: #ffcc99;
}

.limit {
  stroke: #666600;
  stroke-dasharray: 10 3 3 3;
  shape-rendering: crispEdges;
}

.line {
  fill: none;
  stroke-width: 2;
  shape-rendering: crispEdges;
}

.speed { stroke: #336699; }
.cadence { stroke: #2a0033; }
.altitude { stroke: #993333; }

.frame,
.axis {
  fill: none;
  stroke: #333;
  shape-rendering: crispEdges;
}

.axis {
  stroke-width: 2;
}

.hr-labels {
  fill: #b03038;
  text-anchor: end;
}

.altitude-labels { fill: #883030; }

.cadence-labels {
  fill: #2a0033;
  text-anchor: end;
}

.speed-labels { fill: #336699; }

.distance-labels {
  fill: #333;
  text-anchor: middle;
}

.distance-title { fill: #444; }

/* Cursor values */
.readout {
  display: flex;
  height: 114px;
  padding-left: 87px;
  font-size: 14px;
  line-height: 21px;
}

.readout ul {
  list-style: none;
  margin: 0;
  padding: 0;
  width: 208px;
}

.readout ul + ul {
  width: 454px;
}

.c-hr { color: #b03038; }
.c-alt { color: #883030; }
.c-speed { color: #336699; }
.c-cadence { color: #2a0033; }

.climb {
  width: 290px;
  height: 89px;
  margin-top: 3px;
  padding: 6px 0 4px 7px;
  border: 1px solid #000;
  box-shadow: 1px 1px #888;
  border-spacing: 0;
  table-layout: fixed;
  color: #883030;
}

.climb td {
  padding: 0;
  white-space: nowrap;
}

.climb td:nth-child(1) { width: 24px; }
.climb td:nth-child(2) { width: 62px; }
.climb td:nth-child(3) { width: 66px; }
.climb td:nth-child(4) { width: 75px; }

.climb svg {
  width: 12px;
  height: 12px;
  fill: none;
  stroke: #20d0a0;
}

/* Summary */
.summary {
  width: calc(100% - 3px);
  margin: 0 1px 4px 2px;
  border-collapse: collapse;
  table-layout: fixed;
  font-size: 17px;
}

.w1 { width: 124px; }
.w2 { width: 347px; }
.w3 { width: 121px; }
.w4 { width: 169px; }
.w5 { width: 145px; }
.w6 { width: 128px; }

.summary th,
.summary td {
  height: 32px;
  padding: 7px 0 0 6px;
  border: 1px solid #808080;
  background: #d6d6d6;
  font-weight: normal;
  text-align: left;
  line-height: 20px;
  white-space: nowrap;
}

.summary th,
.summary .light {
  background: #e2e2e2;
}

.summary .mid {
  padding: 7px 4px 0 0;
  text-align: center;
}

.summary .note {
  vertical-align: top;
  padding-top: 9px;
}

.key {
  position: relative;
}

.key::after {
  content: "";
  position: absolute;
  top: 15px;
  right: 6px;
  width: 16px;
  height: 2px;
}

.k-hr::after { background: #c03038; }
.k-speed::after { background: #336699; }
.k-cadence::after { background: #2a0033; }

/* Taskbar */
.taskbar {
  display: flex;
  align-items: center;
  height: 28px;
  padding: 0 2px;
  border-top: 1px solid #fff;
  font: 11px "DejaVu Sans Condensed", Tahoma, sans-serif;
}

.taskbar svg {
  width: 16px;
  height: 16px;
  flex: none;
}

.start,
.tasks button {
  display: flex;
  align-items: center;
  gap: 3px;
  height: 22px;
  padding-left: 3px;
  border: 1px solid;
  border-color: #fff #444 #444 #fff;
  box-shadow: inset -1px -1px #888;
}

.start {
  gap: 1px;
  width: 52px;
  padding-left: 2px;
  font-weight: bold;
}

.quick {
  display: flex;
  gap: 7px;
  margin-left: 7px;
  padding-left: 7px;
  border-left: 2px groove #fff;
}

.more {
  margin: 0 8px 6px auto;
  font-weight: bold;
  font-size: 12px;
}

.tasks {
  display: flex;
  gap: 4px;
  padding: 0 8px 0 6px;
  border: solid #999;
  border-width: 0 1px;
}

.tasks button {
  width: 47px;
}

.tasks .active {
  background: #e6e6e6;
  border-color: #444 #fff #fff #444;
  box-shadow: none;
  font-weight: bold;
}

.search {
  display: flex;
  width: 313px;
  height: 22px;
  margin: 0 15px 0 5px;
}

.search input {
  flex: 1;
  min-width: 0;
  padding: 4px 5px 0;
  border: 1px solid #bbb;
  background: #fff;
  font: inherit;
}

.search input::placeholder {
  color: #888;
}

.search button {
  width: 24px;
  padding-left: 4px;
  background: #e4e4e4;
}

.tray {
  display: flex;
  align-items: center;
  gap: 7px;
  width: 78px;
  height: 22px;
  padding-left: 4px;
  border: 1px solid;
  border-color: #888 #fff #fff #888;
  color: #000;
}

.tray button {
  font-weight: bold;
}
```
